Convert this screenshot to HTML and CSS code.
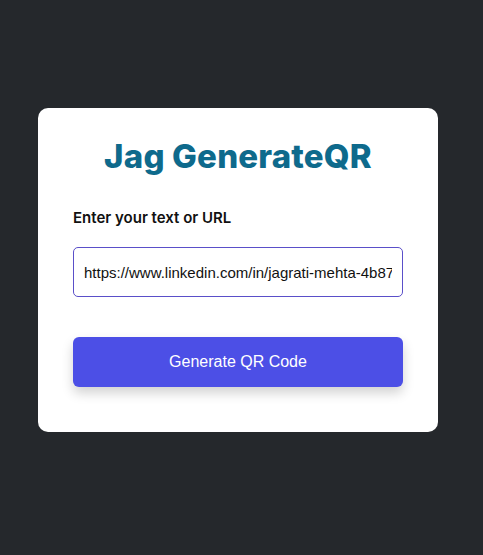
FILE: index.html
```html
<!DOCTYPE html>
<html>
<head>
<meta charset="utf-8">
<link rel="stylesheet" href="styles.css">
</head>
<body>
<div class="card">
  <h1 class="title">Jag GenerateQR</h1>
  <label class="label" for="qr">Enter your text or URL</label>
  <input id="qr" class="input" type="text" value="https://www.linkedin.com/in/jagrati-mehta-4b87">
  <button class="btn">Generate QR Code</button>
</div>
</body>
</html>
```

FILE: styles.css
```css
html, body {
  margin: 0;
  padding: 0;
  background: #25282c;
}
body {
  height: 555px;
  font-family: "Inter", "Noto Sans", sans-serif;
}
.card {
  box-sizing: border-box;
  width: 400px;
  height: 324px;
  margin: 108px 0 0 38px;
  background: #ffffff;
  border-radius: 10px;
  padding: 24px 35px 0;
  display: flex;
  flex-direction: column;
}
.title {
  margin: 0;
  text-align: center;
  font-size: 33px;
  line-height: 48px;
  font-weight: 800;
  color: #0e6a8c;
  letter-spacing: 0.2px;
}
.label {
  margin-top: 27px;
  font-size: 15px;
  line-height: 22px;
  font-weight: 600;
  color: #111111;
}
.input {
  box-sizing: border-box;
  margin-top: 18px;
  width: 330px;
  height: 50px;
  border: 1px solid #5a4fc9;
  border-radius: 5px;
  padding: 0 10px;
  font-family: "Liberation Sans", Arial, sans-serif;
  font-size: 15px;
  color: #111111;
  outline: none;
}
.btn {
  margin-top: 40px;
  width: 330px;
  height: 50px;
  border: none;
  border-radius: 6px;
  background: #4c4fe6;
  color: #ffffff;
  font-family: "Liberation Sans", Arial, sans-serif;
  font-size: 16px;
  box-shadow: 0 6px 12px rgba(0, 0, 0, 0.18);
}
```
